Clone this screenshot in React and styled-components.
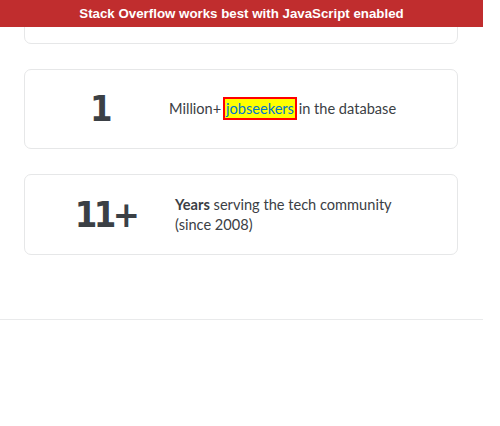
import React from "react";
import styled, { createGlobalStyle } from "styled-components";

const Global = createGlobalStyle`
  html, body { margin: 0; padding: 0; background: #fff; }
  body { font-family: Lato, "Open Sans", sans-serif; color: #3b4045; }
`;

const Banner = styled.div`
  position: fixed;
  top: 0;
  left: 0;
  width: 483px;
  height: 27px;
  background: #c02d2e;
  color: #fff;
  font-family: "Liberation Sans", Arial, sans-serif;
  font-weight: 700;
  font-size: 13.3px;
  line-height: 27px;
  text-align: center;
  z-index: 10;
`;

const Viewport = styled.div`
  width: 483px;
  height: 426px;
  overflow: hidden;
`;

const Section = styled.div`
  padding: 0 25px 0 24px;
  display: flex;
  flex-direction: column;
  gap: 25px;
`;

const Card = styled.div`
  border: 1px solid #e6e7e8;
  border-radius: 7px;
  background: #fff;
  height: ${(p) => p.$h}px;
  box-sizing: border-box;
  display: flex;
  align-items: center;
  padding-left: ${(p) => p.$indent || 0}px;
  margin-top: ${(p) => p.$offset || 0}px;
`;

const Number = styled.div`
  width: 80px;
  flex-shrink: 0;
  text-align: center;
  font-family: "DejaVu Sans Condensed", "DejaVu Sans", sans-serif;
  font-size: 36px;
  font-weight: 700;
  letter-spacing: -3.5px;
  text-indent: -3px;
  line-height: 1;
  color: #3b4045;
`;

const Text = styled.p`
  margin: 0 0 0 28px;
  max-width: 240px;
  font-size: 14.6px;
  line-height: 20px;
  color: #3b4045;
  strong { font-weight: 700; }
`;

const Highlight = styled.span`
  background: #ffff00;
  color: #0074cc;
  outline: 2px solid #ff0000;
  padding: 1px 1px;
`;

const Divider = styled.hr`
  margin: 64px 0 0;
  border: 0;
  border-top: 1px solid #e9eaeb;
  width: 483px;
`;

export default function App() {
  return (
    <>
      <Global />
      <Banner>Stack Overflow works best with JavaScript enabled</Banner>
      <Viewport>
        <Section>
          <Card $h={80} $offset={-36} />
          <Card $h={80} $indent={36}>
            <Number>1</Number>
            <Text>
              Million+ <Highlight>jobseekers</Highlight> in the database
            </Text>
          </Card>
          <Card $h={81} $indent={42}>
            <Number>11+</Number>
            <Text>
              <strong>Years</strong> serving the tech community (since 2008)
            </Text>
          </Card>
        </Section>
        <Divider />
      </Viewport>
    </>
  );
}
